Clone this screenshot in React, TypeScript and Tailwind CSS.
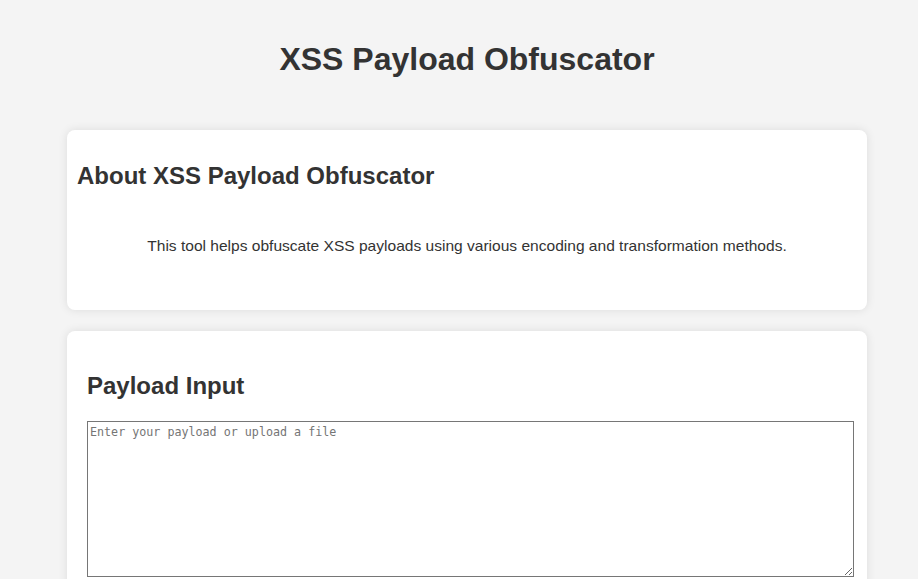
export default function App() {
  return (
    <div className="min-h-screen bg-[#f4f4f4] pl-[16px] pt-[41px] pb-[40px] text-[#333] font-['Liberation_Sans',Arial,sans-serif]">
      <h1 className="text-center text-[32px] font-bold leading-[37px]">XSS Payload Obfuscator</h1>

      <div className="mx-auto mt-[52px] flex w-[800px] flex-col gap-[21px]">
        <section className="rounded-[8px] bg-white px-[10px] pt-[10px] pb-[10px] shadow-[0_0_10px_rgba(0,0,0,0.1)]">
          <h2 className="mt-[22px] text-[24px] font-bold leading-[28px]">About XSS Payload Obfuscator</h2>
          <p className="mt-[47px] mb-[45px] text-center text-[15.55px] leading-[18px]">
            This tool helps obfuscate XSS payloads using various encoding and transformation methods.
          </p>
        </section>

        <section className="rounded-[8px] bg-white p-[20px] shadow-[0_0_10px_rgba(0,0,0,0.1)]">
          <h2 className="mt-[21px] mb-[21px] text-[24px] font-bold leading-[28px]">Payload Input</h2>
          <textarea
            className="block h-[156px] w-[767px] border border-[#767676] px-[2px] pt-[3px] pb-[2px] font-['DejaVu_Sans_Mono',monospace] text-[11.7px] leading-[15px] text-black placeholder:text-[#757575]"
            placeholder="Enter your payload or upload a file"
          />
          <div className="h-[40px]" />
        </section>
      </div>
    </div>
  );
}
